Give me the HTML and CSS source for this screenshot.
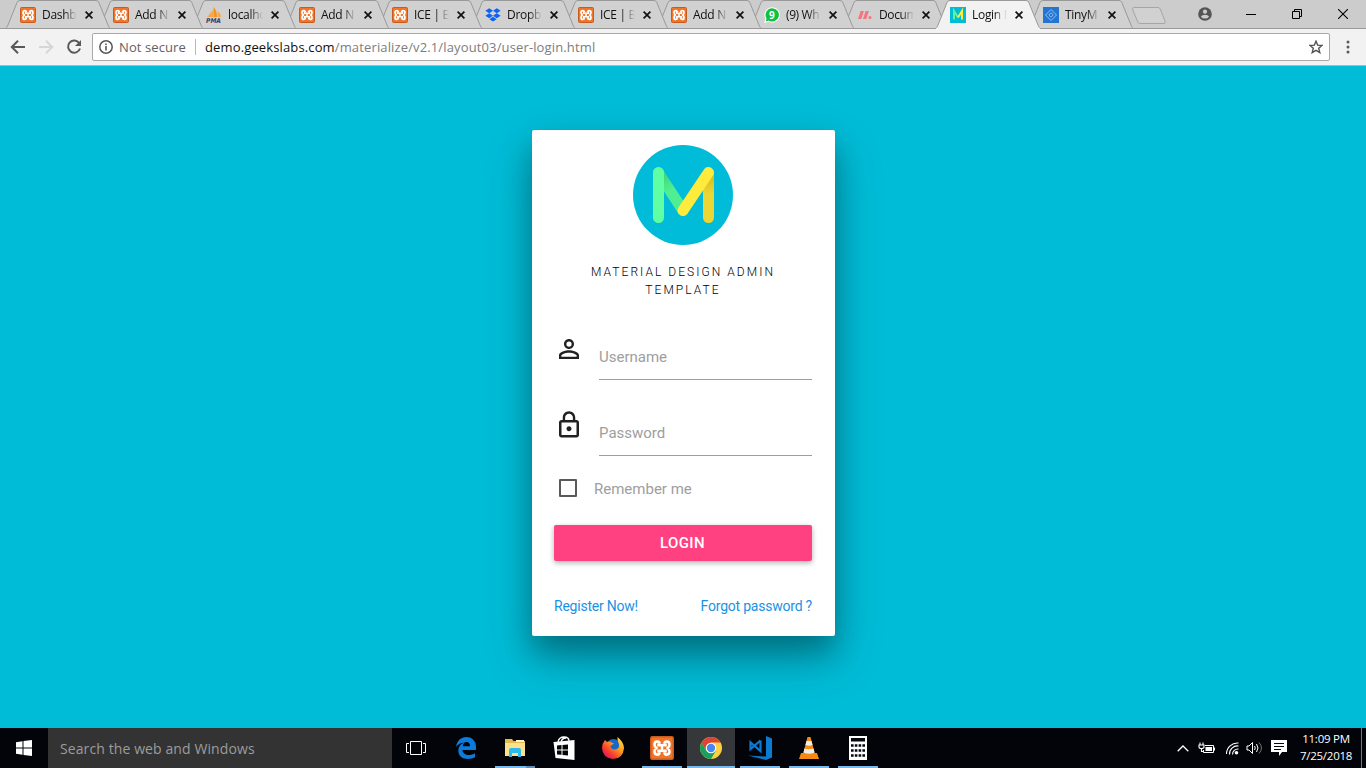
FILE: index.html
```html
<!DOCTYPE html>
<html lang="en">
<head>
<meta charset="utf-8">
<title>Login Page</title>
<link rel="stylesheet" href="styles.css">
</head>
<body>
<svg class="defs" width="0" height="0">
  <symbol id="tab" viewBox="0 0 106 29"><path d="M.4 28.5 C2 27.5 2 27 3 25 L12 2.5 Q12.8.5 15 .5 H91 Q93 .5 93.8 2.5 L103 25 C104 27.5 104.5 28 105.6 28.5Z"/></symbol>
  <symbol id="xampp" viewBox="0 0 16 16">
    <rect x=".5" y=".5" width="15" height="15" rx="1" fill="#ee752b" stroke="#c95c1c"/>
    <path d="M6.400 5.200Q6.400 3.600 4.800 3.600 3 3.600 3 5.600 3 7 4.200 8 3 9 3 10.400 3 12.400 4.800 12.400 6.400 12.400 6.400 10.800M9.600 5.200Q9.600 3.600 11.200 3.600 13 3.600 13 5.600 13 7 11.800 8 13 9 13 10.400 13 12.400 11.200 12.400 9.600 12.400 9.600 10.800" fill="none" stroke="#fff" stroke-width="1.700"/>
    <path d="M5.600 5V6.200H10.400V5M5.600 11V9.800H10.400V11M8 6V10" fill="none" stroke="#fff" stroke-width="1.600"/>
  </symbol>
  <symbol id="close" viewBox="0 0 8 8"><path d="M.6.6L7.4 7.4M7.4.6L.6 7.4" stroke="#111" stroke-width="1.7"/></symbol>
</svg>

<header class="browser">
  <div class="tabstrip">
    <div class="tab"><svg class="shape"><use href="#tab"/></svg><svg class="fav"><use href="#xampp"/></svg><span>Dashb</span><svg class="x"><use href="#close"/></svg></div>
    <div class="tab"><svg class="shape"><use href="#tab"/></svg><svg class="fav"><use href="#xampp"/></svg><span>Add N</span><svg class="x"><use href="#close"/></svg></div>
    <div class="tab"><svg class="shape"><use href="#tab"/></svg><svg class="fav" viewBox="0 0 16 16"><path d="M1 10L7 3V10Z" fill="#f6a94a"/><path d="M7.5 10V0Q11 3 11 10Z" fill="#f39324"/><path d="M11.5 10V4Q14.5 6 15 10Z" fill="#f6a94a"/><text x="0" y="15.500" class="pma" textLength="15" lengthAdjust="spacingAndGlyphs">PMA</text></svg><span>localho</span><svg class="x"><use href="#close"/></svg></div>
    <div class="tab"><svg class="shape"><use href="#tab"/></svg><svg class="fav"><use href="#xampp"/></svg><span>Add N</span><svg class="x"><use href="#close"/></svg></div>
    <div class="tab"><svg class="shape"><use href="#tab"/></svg><svg class="fav"><use href="#xampp"/></svg><span>ICE | B</span><svg class="x"><use href="#close"/></svg></div>
    <div class="tab"><svg class="shape"><use href="#tab"/></svg><svg class="fav" viewBox="0 0 16 16"><path d="M4.2 1.2L8 3.7 4.2 6.2.4 3.7ZM11.8 1.2L15.6 3.7 11.8 6.2 8 3.7ZM4.2 6.2L8 8.7 4.2 11.2.4 8.7ZM11.8 6.2L15.6 8.7 11.8 11.2 8 8.7ZM8 9.8L11.6 12.2 8 14.6 4.4 12.2Z" fill="#0b62f5"/></svg><span>Dropb</span><svg class="x"><use href="#close"/></svg></div>
    <div class="tab"><svg class="shape"><use href="#tab"/></svg><svg class="fav"><use href="#xampp"/></svg><span>ICE | B</span><svg class="x"><use href="#close"/></svg></div>
    <div class="tab"><svg class="shape"><use href="#tab"/></svg><svg class="fav"><use href="#xampp"/></svg><span>Add N</span><svg class="x"><use href="#close"/></svg></div>
    <div class="tab"><svg class="shape"><use href="#tab"/></svg><svg class="fav" viewBox="0 0 16 16"><path d="M8.2.7A7.2 7.2 0 1 1 4.6 14.1L.9 15.2 2 11.5A7.2 7.2 0 0 1 8.2.7Z" fill="#0ec143" stroke="#fff" stroke-width="1.1"/><text x="5" y="11.7" class="nine">9</text></svg><span class="tight">(9) Wh</span><svg class="x"><use href="#close"/></svg></div>
    <div class="tab"><svg class="shape"><use href="#tab"/></svg><svg class="fav" viewBox="0 0 16 16"><path d="M3.6 4H6.9L4.3 12H1ZM8.6 4H11.9L9.3 12H6Z" fill="#f4767c"/><circle cx="13" cy="10.5" r="1.5" fill="#f4767c"/></svg><span class="tight">Docum</span><svg class="x"><use href="#close"/></svg></div>
    <div class="tab active"><svg class="shape"><use href="#tab"/></svg><svg class="fav" viewBox="0 0 16 16"><path d="M0 0H16V16H0Z" fill="#00bcd4"/><path d="M4 12.4V4L8 10.5" fill="none" stroke="#5df2a0" stroke-width="2"/><path d="M12 12.4V4L8 10.5" fill="none" stroke="#ffeb3b" stroke-width="2"/></svg><span>Login P</span><svg class="x"><use href="#close"/></svg></div>
    <div class="tab"><svg class="shape"><use href="#tab"/></svg><svg class="fav" viewBox="0 0 16 16"><path d="M0 0H16V16H0Z" fill="#2276d2"/><path d="M8 2.5L13.5 8 8 13.5 2.5 8ZM8 5.8L10.2 8 8 10.2 5.8 8Z" fill="none" stroke="#8fc0f2"/></svg><span>TinyM</span><svg class="x"><use href="#close"/></svg></div>
    <svg class="newtab" viewBox="0 0 36 19"><path d="M3 1.5H27Q28.5 1.5 29.2 3L34 15Q34.7 17.5 33 17.5H9Q7.500 17.500 6.800 16L1.600 3.500Q1 1.500 3 1.500Z" fill="#d1d1d1" stroke="#a5a5a5"/></svg>
    <div class="wincontrols">
      <svg width="14" height="14" viewBox="0 0 14 14"><circle cx="7" cy="7" r="6.8" fill="#555"/><circle cx="7" cy="4.700" r="2.100" fill="#ccc"/><path d="M2.900 9.400Q4 7.800 7 7.800T11.100 9.400Q9.800 11.600 7 11.600T2.900 9.400Z" fill="#ccc"/></svg>
      <svg width="10" height="12" viewBox="0 0 10 12"><path d="M0 6.500H10" stroke="#000"/></svg>
      <svg width="10" height="10" viewBox="0 0 10 10"><path d="M.5 2.500H7.500V9.500H.5ZM2.500 2.500V.5H9.500V7.500H7.500" fill="none" stroke="#000"/></svg>
      <svg width="10" height="10" viewBox="0 0 10 10"><path d="M0 0L10 10M10 0L0 10" stroke="#000" stroke-width="1.100"/></svg>
    </div>
  </div>
  <div class="toolbar">
    <svg class="nav" viewBox="0 0 16 16"><path d="M15 8H2M8 1.800L1.800 8 8 14.200" fill="none" stroke="#56585c" stroke-width="2"/></svg>
    <svg class="nav" viewBox="0 0 16 16"><path d="M1 8H14M8 1.800L14.200 8 8 14.200" fill="none" stroke="#d6d6d8" stroke-width="2"/></svg>
    <svg class="nav" viewBox="0 0 16 16"><path d="M13.300 4.300A6.100 6.100 0 1 0 14 9.500" fill="none" stroke="#56585c" stroke-width="2"/><path d="M15 1V7H9Z" fill="#56585c"/></svg>
    <div class="omnibox">
      <svg width="14" height="14" viewBox="0 0 14 14"><circle cx="7" cy="7" r="6.200" fill="none" stroke="#56585c" stroke-width="1.500"/><path d="M7 6V10.500M7 3.400V4.900" stroke="#56585c" stroke-width="1.600"/></svg>
      <span class="secure">Not secure</span>
      <span class="url"><b>demo.geekslabs.com</b>/materialize/v2.1/layout03/user-login.html</span>
      <svg class="star" width="14" height="14" viewBox="0 0 14 14"><path d="M7 1.200L8.700 5.200 13 5.500 9.700 8.300 10.800 12.600 7 10.300 3.200 12.600 4.300 8.300 1 5.500 5.300 5.200Z" fill="none" stroke="#505256" stroke-width="1.400"/></svg>
    </div>
    <svg class="dots" width="4" height="14" viewBox="0 0 4 14"><g fill="#5a5b60"><circle cx="2" cy="2" r="1.500"/><circle cx="2" cy="7" r="1.500"/><circle cx="2" cy="12" r="1.500"/></g></svg>
  </div>
</header>

<main class="page">
  <form class="card">
    <svg class="logo" viewBox="0 0 100 100">
      <defs>
        <linearGradient id="g" x1="30" y1="30" x2="44" y2="60" gradientUnits="userSpaceOnUse"><stop offset="0" stop-color="#3fd87c"/><stop offset=".5" stop-color="#4fee92"/></linearGradient>
        <linearGradient id="y" x1="0" y1="30" x2="0" y2="78" gradientUnits="userSpaceOnUse"><stop offset="0" stop-color="#d2bc20"/><stop offset=".4" stop-color="#ead735"/></linearGradient>
      </defs>
      <circle cx="50" cy="50" r="50" fill="#00bcd8"/>
      <g fill="none" stroke-width="11" stroke-linecap="round">
        <path d="M25.500 28L50 65.500" stroke="url(#g)"/>
        <path d="M25.500 27.500V72.500" stroke="#5fffa3"/>
      </g>
      <path d="M70 27.500H81V72.500A5.500 5.500 0 0 1 70 72.500Z" fill="url(#y)"/>
      <path d="M50 65.500L75.500 27.500" stroke="#ffeb3b" stroke-width="11" stroke-linecap="round"/>
    </svg>
    <p class="caption">MATERIAL DESIGN ADMIN TEMPLATE</p>
    <div class="field">
      <svg viewBox="0 0 24 24"><path d="M12 5.900a2.100 2.100 0 1 1 0 4.200 2.100 2.100 0 0 1 0-4.200m0 9c2.970 0 6.100 1.460 6.100 2.100v1.100H5.900V17c0-.64 3.130-2.100 6.100-2.100M12 4C9.790 4 8 5.790 8 8s1.790 4 4 4 4-1.790 4-4-1.790-4-4-4zm0 9c-2.670 0-8 1.340-8 4v3h16v-3c0-2.660-5.330-4-8-4z"/></svg>
      <label>Username</label>
    </div>
    <div class="field">
      <svg viewBox="0 0 24 24"><path d="M12 17c1.100 0 2-.9 2-2s-.9-2-2-2-2 .9-2 2 .9 2 2 2zm6-9h-1V6c0-2.760-2.240-5-5-5S7 3.240 7 6v2H6c-1.100 0-2 .9-2 2v10c0 1.100.9 2 2 2h12c1.100 0 2-.9 2-2V10c0-1.100-.9-2-2-2zM8.900 6c0-1.710 1.390-3.100 3.100-3.100s3.100 1.390 3.100 3.100v2H8.900V6zM18 20H6V10h12v10z"/></svg>
      <label>Password</label>
    </div>
    <div class="remember"><i></i><span>Remember me</span></div>
    <div class="button">LOGIN</div>
    <div class="links"><a>Register Now!</a><a>Forgot password ?</a></div>
  </form>
</main>

<footer class="taskbar">
  <div class="start"><svg width="16" height="16" viewBox="0 0 16 16"><path d="M0 2.200L6.500 1.300V7.500H0ZM7.500 1.100L16 0V7.500H7.500ZM0 8.500H6.500V14.700L0 13.800ZM7.500 8.500H16V16L7.500 14.900Z" fill="#fff"/></svg></div>
  <div class="search">Search the web and Windows</div>
  <div class="app view"><svg width="20" height="14" viewBox="0 0 20 14"><path d="M4.500.5H15.500V13.500H4.500ZM3 2.500H.5V11.500H3M17 2.500H19.500V11.500H17" fill="none" stroke="#fff"/></svg></div>
  <div class="app"><svg width="20" height="22" viewBox="0 0 20 22"><path d="M0 10C1 3.500 5 0 10.500 0 16.500 0 20 4.500 20 10V13H6.500C6.700 16.500 9.500 18 12.500 18 15 18 17.300 17.300 19 16.200V20.300C17 21.400 14.500 22 12 22 6 22 2.300 18.500 2.300 13.500 2.300 9.800 4.500 7 7.800 5.700 4.500 5.800 1.800 7.500 0 10ZM6.700 9.300H14C14 6.500 12.700 5 10.400 5 8.300 5 7 6.800 6.700 9.300Z" fill="#0b7bdc"/></svg></div>
  <div class="app run group"><svg width="22" height="20" viewBox="0 0 22 20"><path d="M1 1H8L9.500 3H21V18H1Z" fill="#e6b94c"/><path d="M1 5H21V18H1Z" fill="#fbe08d"/><path d="M12 2H20V4H12Z" fill="#fff3c8"/><path d="M5 19V12Q5 10 7 10H15Q17 10 17 12V19H14V15H8V19Z" fill="#2db9ea"/></svg></div>
  <div class="app"><svg width="22" height="24" viewBox="0 0 22 24"><path d="M.5 6L21.500 4V24L2.500 22Z" fill="#fff"/><path d="M5 6Q6 1 11 1T16 5M8 6Q9 2 13 2" fill="none" stroke="#fff" stroke-width="1.300"/><path d="M4 9.500L8.500 9V13.500H4ZM9.500 9L15 8.400V13.500H9.500ZM4 14.500H8.500V18.800L4 18.400ZM9.500 14.500H15V19.500L9.500 18.900Z" fill="#05060a"/></svg></div>
  <div class="app"><svg width="22" height="22" viewBox="0 0 22 22"><defs><linearGradient id="fx" x1="1" y1=".1" x2=".2" y2="1"><stop stop-color="#ffe84a"/><stop offset=".4" stop-color="#ff9a1f"/><stop offset=".75" stop-color="#f7392e"/><stop offset="1" stop-color="#d41367"/></linearGradient></defs><circle cx="11.500" cy="9.500" r="7.500" fill="#1668c7"/><path d="M3 3L5 5 8 4.500Q10 6 12 6.500L8.500 9Q9 12.500 13 12.500 17.500 12 17 7.500 15 3 15.500 0 21.500 4.500 22 11 21 22 11 22 .5 21 0 11 .3 6 3 3Z" fill="url(#fx)"/></svg></div>
  <div class="app run"><svg width="24" height="24"><use href="#xampp"/></svg></div>
  <div class="app run current"><svg width="22" height="22" viewBox="0 0 22 22"><circle cx="11" cy="11" r="11" fill="#fdd03f"/><path d="M1.500 5.500A11 11 0 0 1 20.500 5.500H11L6.200 13.700Z" fill="#db4437"/><path d="M1.500 5.500A11 11 0 0 0 11 22L15.800 13.800H6.200Z" fill="#17a05e"/><circle cx="11" cy="11" r="5.300" fill="#fff"/><circle cx="11" cy="11" r="4.200" fill="#4587f3"/></svg></div>
  <div class="app run"><svg width="24" height="24" viewBox="0 0 24 24"><path d="M18 0L24 2.500V21.500L18 24 0 19.500 18 20.500Z" fill="#0a7bd0"/><path d="M12.500 4.500V15L2.500 6.500V13L12.500 4.500" fill="none" stroke="#0a7bd0" stroke-width="2.200"/></svg></div>
  <div class="app run"><svg width="20" height="24" viewBox="0 0 20 24"><path d="M2 17H18L20 23H0Z" fill="#f58a13"/><path d="M8.500 1H11.500L16 18Q10 22 4 18Z" fill="#f58a13"/><path d="M7.500 5H12.500L13.500 9Q10 10.500 6.500 9ZM5.500 12.500Q10 14 14.500 12.500L15.500 16.500Q10 19 4.500 16.500Z" fill="#eee"/></svg></div>
  <div class="app run"><svg width="18" height="24" viewBox="0 0 18 24"><path d="M0 0H18V24H0Z" fill="#fff"/><path d="M2 2H16V5.500H2Z" fill="#05060a"/><path d="M2 9.500H16M2 14.500H16M2 19.500H16" stroke="#05060a" stroke-width="2.500" stroke-dasharray="2.600 1.200"/></svg></div>
  <div class="tray">
    <svg width="12" height="7" viewBox="0 0 12 7"><path d="M.7 6.300L6 1 11.300 6.300" fill="none" stroke="#fff" stroke-width="1.300"/></svg>
    <svg width="18" height="12" viewBox="0 0 18 12"><path d="M2 .5V3M5 .5V3M1 3H6V5Q6 6.500 3.500 6.500T1 5ZM3.500 6V9.500H6" fill="none" stroke="#fff" stroke-width="1.100"/><path d="M7 3.500H15.500V10.500H5.500V8M16.500 5.500V8.500" fill="none" stroke="#fff"/><path d="M7.500 5H14V9H7.500Z" fill="#fff"/></svg>
    <svg width="15" height="14" viewBox="0 0 15 14"><path d="M1.500 13A11 11 0 0 1 13.500 2M4.500 13.500A8 8 0 0 1 13.500 5M7.500 13.500A5.500 5.500 0 0 1 13.500 8" fill="none" stroke="#fff" stroke-width="1.100"/><circle cx="11.500" cy="11.800" r="1.800" fill="#fff"/></svg>
    <svg width="18" height="14" viewBox="0 0 18 14"><path d="M1 5H3L6.500 1.500V12.500L3 9H1Z" fill="none" stroke="#fff"/><path d="M8.500 5Q10 7 8.500 9M10.500 3Q13.500 7 10.500 11" fill="none" stroke="#fff"/><path d="M13 1.500Q18 7 13 12.500" fill="none" stroke="#777"/></svg>
    <svg class="note" width="16" height="16" viewBox="0 0 16 16"><path d="M0 0H16V12H11L8 16V12H0Z" fill="#fff"/><path d="M3 3.500H13M3 6.500H13M3 9.500H10" stroke="#05060a"/></svg>
    <div class="clock"><span>11:09 PM</span><span>7/25/2018</span></div>
  </div>
</footer>
</body>
</html>
```
FILE: styles.css
```css
* { box-sizing: border-box; }
body { margin: 0; width: 1366px; height: 768px; overflow: hidden; display: flex; flex-direction: column; font-family: "Open Sans", "Noto Sans", sans-serif; }
svg { display: block; flex: none; }
.defs { position: absolute; }

.browser { height: 66px; background: #f2f2f2; border-bottom: 1px solid #b5b5b5; }
.tabstrip { height: 29px; background: #ccc; border-bottom: 1px solid #999; padding-left: 5px; display: flex; }
.tab { position: relative; width: 106px; height: 29px; margin-right: -13px; padding-left: 15px; display: flex; align-items: center; flex: none; font-size: 12px; color: #111; }
.shape { position: absolute; left: 0; top: 0; width: 106px; height: 29px; fill: #d1d1d1; stroke: #999; }
.tab .fav { position: relative; width: 16px; height: 16px; }
.tab span { position: relative; width: 38px; margin: 0 5px 0 6px; line-height: 18px; white-space: nowrap; letter-spacing: -.3px; -webkit-mask-image: linear-gradient(90deg, #000 58%, transparent 92%); mask-image: linear-gradient(90deg, #000 58%, transparent 92%); }
.tab span.tight { letter-spacing: -.4px; }
.tab .x { position: relative; width: 8px; height: 8px; }
.tab:nth-child(1) { z-index: 12; }
.tab:nth-child(2) { z-index: 11; }
.tab:nth-child(3) { z-index: 10; }
.tab:nth-child(4) { z-index: 9; }
.tab:nth-child(5) { z-index: 8; }
.tab:nth-child(6) { z-index: 7; }
.tab:nth-child(7) { z-index: 6; }
.tab:nth-child(8) { z-index: 5; }
.tab:nth-child(9) { z-index: 4; }
.tab:nth-child(10) { z-index: 3; }
.tab:nth-child(12) { z-index: 1; }
.tab.active { z-index: 20; }
.active .shape { fill: #f2f2f2; }
.active::after { content: ""; position: absolute; left: 1px; right: 1px; bottom: 0; height: 1px; background: #f2f2f2; }
.pma { font: italic bold 6.500px "DejaVu Sans", sans-serif; fill: #34406f; }
.nine { font: bold 10px "Open Sans", sans-serif; fill: #fff; }
.newtab { width: 36px; height: 19px; margin: 6px 0 0 10px; }
.wincontrols { margin-left: auto; padding-right: 18px; height: 27px; display: flex; align-items: center; gap: 36px; }
.wincontrols svg:first-child { margin-right: -2px; }

.toolbar { height: 36px; padding: 4px 16px 4px 10px; display: flex; align-items: center; }
.nav { width: 16px; height: 16px; margin-right: 12px; }
.nav:nth-child(3) { margin-right: 10px; }
.omnibox { flex: 1; height: 28px; margin-right: 16px; background: #fff; border: 1px solid #a9a9a9; border-radius: 2px; padding: 0 6px; display: flex; align-items: center; font-size: 13px; }
.secure { color: #5f6166; margin-left: 6px; padding-right: 9px; border-right: 1px solid #b8b8b8; line-height: 16px; width: 77px; white-space: nowrap; letter-spacing: .1px; }
.url { color: #7d7d7d; margin-left: 9px; letter-spacing: .135px; }
.url b { color: #111; font-weight: normal; }
.star { margin-left: auto; }

.page { height: 662px; background: #00bcd7; padding-top: 64px; font-family: Roboto, sans-serif; }
.card { width: 303px; height: 506px; margin: 0 0 0 532px; padding: 15px 23px 0 22px; background: #fff; border-radius: 2px; box-shadow: 0 16px 28px rgba(0,0,0,.25), 0 23px 50px rgba(0,0,0,.22); }
.logo { width: 100px; height: 100px; margin: 0 auto; }
.caption { margin: 18px 0 35px; font-size: 12px; line-height: 18px; letter-spacing: 2.05px; text-align: center; color: #000; font-weight: 300; }
.field { height: 46px; display: flex; margin-bottom: 30px; }
.field svg { width: 30px; height: 30px; fill: #212121; margin-right: 15px; }
.field label { flex: 1; border-bottom: 1px solid #9e9e9e; font-size: 15px; line-height: 46px; color: #9e9e9e; }
.remember { display: flex; height: 18px; margin: -7px 0 28px; padding-left: 5px; align-items: center; font-size: 15px; color: #9e9e9e; }
.remember i { width: 18px; height: 18px; border: 2px solid #5a5a5a; border-radius: 1px; margin-right: 17px; }
.remember span { padding-top: 2px; }
.button { height: 36px; line-height: 36px; padding-right: 1px; text-align: center; background: #ff4081; color: #fff; font-size: 15px; font-weight: 500; letter-spacing: .4px; border-radius: 2px; box-shadow: 0 2px 5px rgba(0,0,0,.2), 0 2px 6px rgba(0,0,0,.12); }
.links { display: flex; justify-content: space-between; margin-top: 35px; font-size: 14px; letter-spacing: -.22px; line-height: 21px; color: #1a92e4; }

.taskbar { height: 40px; background: #020409; display: flex; color: #fff; }
.start { width: 48px; display: flex; align-items: center; justify-content: center; }
.search { width: 344px; background: #333; color: #9c9c9c; padding-left: 12px; font-size: 14px; line-height: 41px; letter-spacing: .1px; }
.app { width: 48px; margin-right: 1px; display: flex; align-items: center; justify-content: center; background: no-repeat center bottom / 40px 2px; }
.app.view { margin-right: 2px; }
.app.run { background-image: linear-gradient(#76b9ed, #76b9ed); }
.app.group { background-image: linear-gradient(90deg, #76b9ed 31px, #5d8fb6 31px); }
.app.current { background-color: #35373b; background-size: 48px 2px; }
.tray { margin-left: auto; display: flex; align-items: center; padding-right: 4px; }
.tray svg:nth-child(2), .tray svg:nth-child(3) { margin-left: 9px; }
.tray svg:nth-child(4) { margin-left: 6px; }
.tray .note { margin-left: 7px; }
.clock { width: 75px; height: 40px; padding: 2px 4px 0 8px; border-right: 1px solid #777; display: flex; flex-direction: column; align-items: center; font-size: 11.500px; line-height: 17px; letter-spacing: -.25px; }
```
